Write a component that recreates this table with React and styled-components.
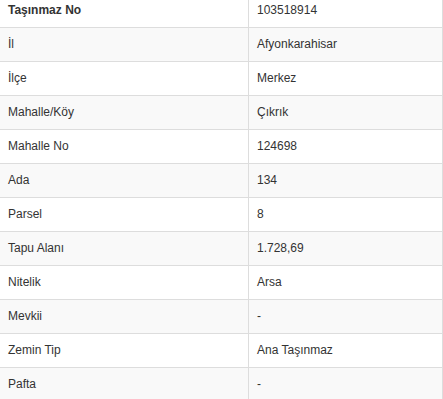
import styled, { createGlobalStyle } from "styled-components";

const rows = [
  ["İl", "Afyonkarahisar"],
  ["İlçe", "Merkez"],
  ["Mahalle/Köy", "Çıkrık"],
  ["Mahalle No", "124698"],
  ["Ada", "134"],
  ["Parsel", "8"],
  ["Tapu Alanı", "1.728,69"],
  ["Nitelik", "Arsa"],
  ["Mevkii", "-"],
  ["Zemin Tip", "Ana Taşınmaz"],
  ["Pafta", "-"],
];

function App() {
  return (
    <>
      <GlobalStyle />
      <Table>
        <colgroup>
          <col style={{ width: 249 }} />
          <col style={{ width: 195 }} />
        </colgroup>
        <thead>
          <tr>
            <Head>Taşınmaz No</Head>
            <Cell last>103518914</Cell>
          </tr>
        </thead>
        <tbody>
          {rows.map(([label, value], i) => (
            <Row key={label} striped={i % 2 === 0}>
              <Cell>{label}</Cell>
              <Cell last>{value}</Cell>
            </Row>
          ))}
        </tbody>
      </Table>
    </>
  );
}

export default App;

const GlobalStyle = createGlobalStyle`
  html, body {
    margin: 0;
    padding: 0;
    background: #fff;
    overflow: hidden;
  }
  body {
    font-family: "Liberation Sans", Arial, sans-serif;
    font-size: 12px;
    color: #333;
  }
`;

const Table = styled.table`
  width: 444px;
  margin: -7px 0 0 -1px;
  table-layout: fixed;
  border-collapse: separate;
  border-spacing: 0;
`;

const Row = styled.tr.withConfig({
  shouldForwardProp: (prop) => prop !== "striped",
})`
  background: ${({ striped }) => (striped ? "#f9f9f9" : "#fff")};
`;

const Cell = styled.td.withConfig({
  shouldForwardProp: (prop) => prop !== "last",
})`
  box-sizing: border-box;
  padding: 8px;
  line-height: 17px;
  height: 34px;
  text-align: left;
  vertical-align: top;
  border-top: 1px solid #ddd;
  border-left: 1px solid #ddd;
  ${({ last }) => last && "border-right: 1px solid #ddd;"}
  white-space: nowrap;
`;

const Head = styled(Cell).attrs({ as: "th" })`
  font-weight: bold;
`;
